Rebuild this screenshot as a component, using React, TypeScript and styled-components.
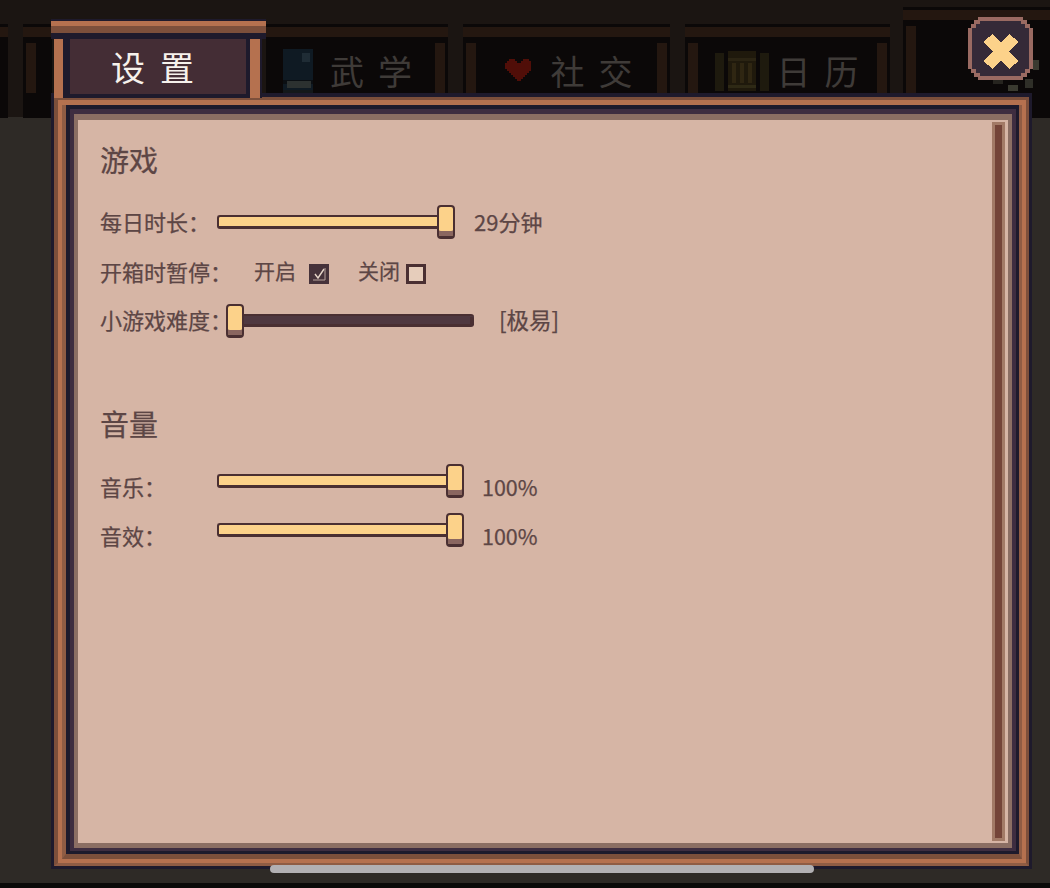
import React from "react";
import styled, { createGlobalStyle } from "styled-components";

const navy = "#1e1a2c";
const darkBrown = "#7c4f3b";
const midBrown = "#8f5c44";
const lightBrown = "#b5714f";
const plum = "#3e2d40";
const taupe = "#8b6e63";
const cream = "#d6b5a5";
const ink = "#5d4645";
const line = "#4a2f32";
const butter = "#fcd28a";
const dimBrown = "#241710";

const Global = createGlobalStyle`
  html, body { margin: 0; padding: 0; background: #2e2a26; }
  body { font-family: "Noto Sans CJK SC", "Noto Sans", sans-serif; }
`;

const Stage = styled.div`
  position: relative;
  width: 1050px;
  height: 888px;
  overflow: hidden;
  display: flex;
  flex-direction: column;
  background: #2e2a26;
`;

const TabStrip = styled.div`
  height: 117px;
  flex: none;
  display: flex;
  align-items: flex-start;
  background: #1b1512;
`;

const DimTab = styled.div<{ $width: number; $top?: number; $gap?: number; $pull?: number }>`
  flex: none;
  width: ${(p) => p.$width}px;
  height: ${(p) => 115 - (p.$top ?? 24)}px;
  margin-top: ${(p) => p.$top ?? 24}px;
  margin-left: ${(p) => p.$gap ?? 0}px;
  margin-right: ${(p) => -(p.$pull ?? 0)}px;
  display: flex;
  flex-direction: column;
  background: #0b0808;
  border-top: 3px solid #0b0808;
`;

const DimCap = styled.div`
  height: 10px;
  flex: none;
  background: ${dimBrown};
  margin-bottom: 6px;
`;

const DimBody = styled.div`
  flex: 1;
  display: flex;
  justify-content: space-between;
  padding: 0 3px;
`;

const DimPost = styled.div<{ $h?: number }>`
  width: 10px;
  height: ${(p) => p.$h ?? 50}px;
  background: ${dimBrown};
`;

const DimContent = styled.div<{ $gap: number; $ml?: number }>`
  display: flex;
  align-items: center;
  gap: ${(p) => p.$gap}px;
  height: 53px;
  margin-top: 1px;
  margin-left: ${(p) => p.$ml ?? 0}px;
`;

const DimTitle = styled.span`
  font-size: 34px;
  line-height: 44px;
  letter-spacing: 14px;
  margin-right: -14px;
  color: #3f3b38;
`;

const ActiveTab = styled.div`
  position: relative;
  z-index: 2;
  flex: none;
  width: 215px;
  height: 79px;
  margin: 19px 0 0 51px;
  display: flex;
  flex-direction: column;
`;

const ActiveCap = styled.div`
  flex: none;
  height: 20px;
  box-sizing: border-box;
  background: ${navy};
  border-top: 2px solid ${navy};
`;

const CapLight = styled.div`
  height: 5px;
  background: ${lightBrown};
`;

const CapDark = styled.div`
  height: 7px;
  background: ${darkBrown};
`;

const ActiveBody = styled.div`
  flex: 1;
  display: flex;
  margin: 0 4px 0 3px;
  background: ${navy};
`;

const ActivePost = styled.div<{ $w: number; $mr: number; $ml: number }>`
  flex: none;
  width: ${(p) => p.$w}px;
  margin: 0 ${(p) => p.$mr}px 0 ${(p) => p.$ml}px;
  background: ${lightBrown};
`;

const ActiveFace = styled.div`
  flex: none;
  width: 176px;
  height: 55px;
  box-sizing: border-box;
  background: #442d35;
  display: flex;
  align-items: center;
  justify-content: center;
  color: #f6f1ec;
  font-size: 34px;
  line-height: 58px;
  letter-spacing: 15px;
  padding-left: 4px;
`;

const Layer = styled.div<{ $t: number; $r: number; $b: number; $l: number; $c: string; $bc?: string }>`
  box-sizing: border-box;
  display: flex;
  flex: 1;
  min-height: 0;
  min-width: 0;
  border-style: solid;
  border-color: ${(p) => p.$c};
  border-bottom-color: ${(p) => p.$bc ?? p.$c};
  border-width: ${(p) => `${p.$t}px ${p.$r}px ${p.$b}px ${p.$l}px`};
`;

const PanelSlot = styled.div`
  flex: none;
  display: flex;
  width: 981px;
  height: 776px;
  margin: -24px 0 0 51px;
`;

const Paper = styled.div`
  flex: 1;
  display: flex;
  background: ${cream};
  padding: 2px 3px 2px 0;
  min-width: 0;
`;

const Content = styled.div`
  flex: 1;
  padding: 17px 0 0 22px;
  color: ${ink};
  -webkit-text-stroke: 0.25px ${ink};
`;

const Rail = styled.div`
  flex: none;
  width: 7px;
  border: 3px solid #a27a66;
  background: #744438;
`;

const Heading = styled.h2<{ $mt?: number }>`
  margin: ${(p) => p.$mt ?? 0}px 0 0;
  font-size: 29px;
  line-height: 40px;
  font-weight: 400;
  color: ${ink};
`;

const Row = styled.div<{ $h: number; $mt?: number }>`
  display: flex;
  align-items: center;
  height: ${(p) => p.$h}px;
  margin-top: ${(p) => p.$mt ?? 0}px;
  font-size: 22px;
`;

const Label = styled.span<{ $w: number }>`
  flex: none;
  width: ${(p) => p.$w}px;
  white-space: nowrap;
`;

const Value = styled.span<{ $ml: number; $size?: number }>`
  margin-left: ${(p) => p.$ml}px;
  font-size: ${(p) => p.$size ?? 22}px;
  white-space: nowrap;
`;

const SliderBox = styled.div<{ $w: number; $lift?: number; $drop?: number }>`
  position: relative;
  flex: none;
  width: ${(p) => p.$w}px;
  height: 14px;
  margin-top: ${(p) => p.$drop ?? 0}px;
  margin-bottom: ${(p) => p.$lift ?? 0}px;
`;

const Track = styled.div<{ $dark?: boolean; $right: number }>`
  position: absolute;
  left: 0;
  top: 0;
  bottom: ${(p) => (p.$dark ? 1 : 0)}px;
  right: ${(p) => p.$right}px;
  box-sizing: border-box;
  background: ${(p) => (p.$dark ? "#4f3840" : butter)};
  border: solid ${line};
  border-width: 2px 0 3px 2px;
  border-radius: ${(p) => (p.$dark ? "3px" : "3px 0 0 3px")};
`;

const Thumb = styled.div<{ $x: number }>`
  position: absolute;
  left: ${(p) => p.$x}px;
  top: -10px;
  width: 18px;
  height: 34px;
  box-sizing: border-box;
  background: ${butter};
  border: 2px solid ${line};
  border-bottom-width: 3px;
  border-radius: 4px;
  box-shadow: inset 0 -5px 0 #8a6660;
`;

const EndNub = styled.div`
  position: absolute;
  right: 0;
  top: 3px;
  width: 4px;
  height: 8px;
  background: ${line};
  border-radius: 0 2px 2px 0;
`;

const CheckBox = styled.span<{ $on?: boolean; $ml: number }>`
  flex: none;
  box-sizing: border-box;
  width: 20px;
  height: 20px;
  margin-left: ${(p) => p.$ml}px;
  margin-top: 6px;
  border: 3px solid ${(p) => (p.$on ? "#46323a" : line)};
  background: ${(p) => (p.$on ? "#46323a" : "#e6cdbb")};
  display: inline-flex;
`;

const Toggle = styled.span<{ $ml: number }>`
  margin-left: ${(p) => p.$ml}px;
  font-size: 21px;
  white-space: nowrap;
  margin-top: -2px;
`;

const CloseIcon = styled.svg`
  position: absolute;
  left: 968px;
  top: 17px;
  z-index: 3;
`;

const HScroll = styled.div`
  position: absolute;
  z-index: 4;
  left: 270px;
  top: 865px;
  width: 544px;
  height: 8px;
  border-radius: 4px;
  background: #b2b0b3;
`;

const Footer = styled.div`
  flex: none;
  height: 5px;
  margin-top: auto;
  background: #0b0a09;
`;

const BookIcon = () => (
  <svg width="30" height="44" viewBox="0 0 30 44" shapeRendering="crispEdges">
    <rect width="30" height="44" fill="#0f1a23" />
    <rect x="19" y="4" width="8" height="9" fill="#1f2c35" />
    <rect x="0" y="31" width="30" height="4" fill="#0b0f13" />
    <rect x="4" y="32" width="24" height="7" fill="#2c3130" />
    <rect x="0" y="41" width="30" height="3" fill="#14181a" />
  </svg>
);

const HeartIcon = () => (
  <svg width="28" height="25" viewBox="0 0 14 12" shapeRendering="crispEdges">
    <path
      fill="#500e08"
      d="M2 0h3v1h1v1h2V1h1V0h3v1h1v1h0v4h-1v1h-1v1h-1v1H9v1H8v1H6v-1H5V9H4V8H3V7H2V6H1V5H0V2h1V1h1z"
    />
  </svg>
);

const LedgerIcon = () => (
  <svg width="54" height="40" viewBox="0 0 54 40" shapeRendering="crispEdges">
    <rect x="0" y="2" width="9" height="38" fill="#1e1a0e" />
    <rect x="45" y="2" width="9" height="38" fill="#1e1a0e" />
    <rect x="13" y="0" width="28" height="40" fill="#1f190c" />
    <rect x="13" y="7" width="28" height="3" fill="#2b2413" />
    <rect x="17" y="12" width="4" height="20" fill="#2f2612" />
    <rect x="25" y="12" width="4" height="20" fill="#2f2612" />
    <rect x="33" y="12" width="4" height="20" fill="#2f2612" />
    <rect x="13" y="34" width="28" height="3" fill="#2e2915" />
  </svg>
);

const CheckMark = () => (
  <svg width="14" height="14" viewBox="0 0 14 14" fill="none">
    <rect x="0.5" y="0.5" width="13" height="13" fill="#46323a" />
    <path d="M3 7l3 4 6-9" stroke="#e6d5c8" strokeWidth="1.4" />
    <path d="M1 13h12M13 1v12" stroke="#b8a39c" strokeWidth="1" />
  </svg>
);

type SliderProps = { width: number; right: number; thumb: number; dark?: boolean; lift?: number; drop?: number };

const Slider = ({ width, right, thumb, dark, lift, drop }: SliderProps) => (
  <SliderBox $w={width} $lift={lift} $drop={drop}>
    <Track $dark={dark} $right={right} />
    <EndNub />
    <Thumb $x={thumb} />
  </SliderBox>
);

export default function App() {
  return (
    <Stage>
      <Global />
      <TabStrip>
        <DimTab $width={8}>
          <DimCap />
        </DimTab>
        <DimTab $width={29} $gap={15} $pull={52}>
          <DimCap />
          <DimBody>
            <DimPost />
          </DimBody>
        </DimTab>
        <ActiveTab>
          <ActiveCap>
            <CapLight />
            <CapDark />
          </ActiveCap>
          <ActiveBody>
            <ActivePost $w={9} $ml={0} $mr={7} />
            <ActiveFace>设置</ActiveFace>
            <ActivePost $w={10} $ml={4} $mr={0} />
          </ActiveBody>
        </ActiveTab>
        <DimTab $width={182}>
          <DimCap />
          <DimBody>
            <DimContent $gap={17} $ml={14}>
              <BookIcon />
              <DimTitle>武学</DimTitle>
            </DimContent>
            <DimPost />
          </DimBody>
        </DimTab>
        <DimTab $width={207} $gap={15}>
          <DimCap />
          <DimBody>
            <DimPost />
            <DimContent $gap={18} $ml={4}>
              <HeartIcon />
              <DimTitle>社交</DimTitle>
            </DimContent>
            <DimPost />
          </DimBody>
        </DimTab>
        <DimTab $width={205} $gap={15}>
          <DimCap />
          <DimBody>
            <DimPost />
            <DimContent $gap={8} $ml={-2}>
              <LedgerIcon />
              <DimTitle>日历</DimTitle>
            </DimContent>
            <DimPost />
          </DimBody>
        </DimTab>
        <DimTab $width={147} $gap={13} $top={7}>
          <DimCap />
          <DimBody>
            <DimPost $h={70} />
          </DimBody>
        </DimTab>
      </TabStrip>

      <PanelSlot>
        <Layer $t={4} $r={3} $b={3} $l={3} $c={navy}>
          <Layer $t={3} $r={3} $b={3} $l={4} $c={darkBrown} $bc={midBrown}>
            <Layer $t={5} $r={4} $b={4} $l={4} $c={lightBrown}>
              <Layer $t={0} $r={3} $b={5} $l={4} $c={midBrown} $bc={darkBrown}>
                <Layer $t={4} $r={3} $b={3} $l={4} $c={navy}>
                  <Layer $t={5} $r={4} $b={3} $l={4} $c={plum}>
                    <Layer $t={6} $r={4} $b={5} $l={4} $c={taupe}>
                      <Paper>
                        <Content>
                          <Heading>游戏</Heading>
                          <Row $h={40} $mt={22}>
                            <Label $w={117}>每日时长：</Label>
                            <Slider width={238} right={18} thumb={220} drop={2} />
                            <Value $ml={19}>29分钟</Value>
                          </Row>
                          <Row $h={40} $mt={10}>
                            <Label $w={154}>开箱时暂停：</Label>
                            <Toggle $ml={0}>开启</Toggle>
                            <CheckBox $on $ml={13}>
                              <CheckMark />
                            </CheckBox>
                            <Toggle $ml={29}>关闭</Toggle>
                            <CheckBox $ml={6} />
                          </Row>
                          <Row $h={40} $mt={8}>
                            <Label $w={126}>小游戏难度：</Label>
                            <Slider width={248} right={0} thumb={0} dark drop={4} />
                            <Value $ml={25} $size={22.5}>[极易]</Value>
                          </Row>
                          <Heading $mt={64}>音量</Heading>
                          <Row $h={40} $mt={23}>
                            <Label $w={117}>音乐：</Label>
                            <Slider width={247} right={16} thumb={229} lift={10} />
                            <Value $ml={18} $size={21.5}>100%</Value>
                          </Row>
                          <Row $h={40} $mt={9}>
                            <Label $w={117}>音效：</Label>
                            <Slider width={247} right={16} thumb={229} lift={10} />
                            <Value $ml={18} $size={21.5}>100%</Value>
                          </Row>
                        </Content>
                        <Rail />
                      </Paper>
                    </Layer>
                  </Layer>
                </Layer>
              </Layer>
            </Layer>
          </Layer>
        </Layer>
      </PanelSlot>

      <Footer />
      <HScroll />

      <CloseIcon width="72" height="76" viewBox="0 0 72 76" shapeRendering="crispEdges">
        <path
          fill="#9a6a62"
          d="M10 0H55V3H59V7H62V11H65V52H62V56H59V60H55V63H10V60H6V56H3V52H0V11H3V7H6V3H10Z"
        />
        <path
          fill="#352a38"
          d="M12 4H53V7H57V11H61V52H57V56H53V59H12V56H8V52H4V11H8V7H12Z"
        />
        <path d="M20 21L46 48M46 21L20 48" stroke="#fcd28a" strokeWidth="12" fill="none" />
        <rect x="65" y="43" width="6" height="10" fill="#3a3a30" />
        <rect x="57" y="62" width="8" height="9" fill="#2f2f28" />
        <rect x="40" y="68" width="10" height="6" fill="#3a3a30" />
        <rect x="25" y="63" width="10" height="4" fill="#26241f" />
      </CloseIcon>
    </Stage>
  );
}
